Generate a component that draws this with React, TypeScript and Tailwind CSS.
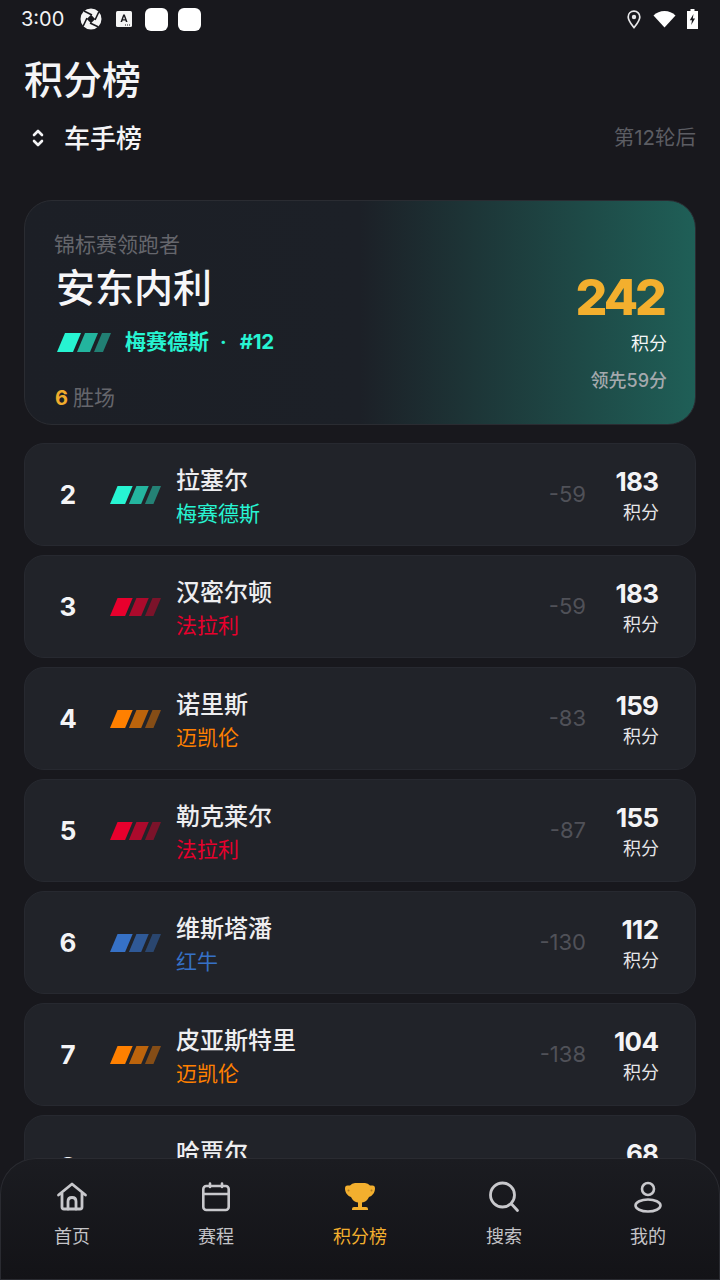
const FONT = "font-['Inter','Noto_Sans_CJK_SC',sans-serif]";

const drivers = [
  { pos: 2, name: "拉塞尔", team: "梅赛德斯", color: "#27f4d2", gap: "-59", pts: 183 },
  { pos: 3, name: "汉密尔顿", team: "法拉利", color: "#e8002d", gap: "-59", pts: 183 },
  { pos: 4, name: "诺里斯", team: "迈凯伦", color: "#ff8000", gap: "-83", pts: 159 },
  { pos: 5, name: "勒克莱尔", team: "法拉利", color: "#e8002d", gap: "-87", pts: 155 },
  { pos: 6, name: "维斯塔潘", team: "红牛", color: "#3671c6", gap: "-130", pts: 112 },
  { pos: 7, name: "皮亚斯特里", team: "迈凯伦", color: "#ff8000", gap: "-138", pts: 104 },
  { pos: 8, name: "哈贾尔", team: "红牛", color: "#3671c6", gap: "-174", pts: 68 },
];

// Three slanted bars that fade out, the team mark
function TeamStripes({ color, width, height }: { color: string; width: number; height: number }) {
  return (
    <svg width={width} height={height} viewBox="0 0 54 19" preserveAspectRatio="none" className="shrink-0">
      <polygon points="0,19 8,0 24,0 16,19" fill={color} />
      <polygon points="20,19 28,0 41,0 33,19" fill={color} fillOpacity="0.7" />
      <polygon points="37,19 45,0 54,0 46,19" fill={color} fillOpacity="0.45" />
    </svg>
  );
}

function StatusBar() {
  return (
    <div className="flex h-[38px] items-center justify-between pl-[21px] pr-[22px]">
      <div className="flex items-center">
        <span className="text-[20px] leading-none text-[#f2f2f4]">3:00</span>
        <svg width="22" height="22" viewBox="0 0 22 22" className="ml-[16px]">
          <circle cx="11" cy="11" r="10.5" fill="#f5f5f5" />
          <path d="M11 6.8 L15.2 11 L11 15.2 L6.8 11 Z" fill="#18181d" />
          <path d="M12 7 L4 3 M15 12 L19 3.5 M10 15 L18.5 19 M7 10 L3 18.5" stroke="#18181d" strokeWidth="1.6" fill="none" />
        </svg>
        <svg width="16" height="16" viewBox="0 0 16 16" className="ml-[14px]">
          <rect width="16" height="16" rx="1.5" fill="#f5f5f5" />
          <path d="M4.5 11 L7.2 3.5 H8.8 L11.5 11 H9.9 L9.4 9.5 H6.6 L6.1 11 Z M7 8.3 H9 L8 5.5 Z" fill="#18181d" />
          <path d="M9 13.5 h1 v1 h-1 Z M11 13.5 h1 v1 h-1 Z M13 13.5 h1 v1 h-1 Z" fill="#18181d" />
        </svg>
        <div className="ml-[13px] h-[23px] w-[23px] rounded-[6px] bg-white" />
        <div className="ml-[10px] h-[23px] w-[23px] rounded-[6px] bg-white" />
      </div>
      <div className="flex items-center">
        <svg width="14" height="19" viewBox="0 0 14 19">
          <path d="M7 1.2 C3.6 1.2 1.2 3.7 1.2 6.9 C1.2 10.6 5 15 7 17.6 C9 15 12.8 10.6 12.8 6.9 C12.8 3.7 10.4 1.2 7 1.2 Z" fill="none" stroke="#e8e8ea" strokeWidth="1.7" />
          <circle cx="7" cy="7" r="2.2" fill="#e8e8ea" />
        </svg>
        <svg width="23" height="18" viewBox="0 0 23 18" className="ml-[12px]">
          <path d="M0.5 5.5 C3.5 2.6 7.2 1 11.5 1 C15.8 1 19.5 2.6 22.5 5.5 L11.5 17.5 Z" fill="#ffffff" />
        </svg>
        <svg width="11" height="20" viewBox="0 0 11 20" className="ml-[11px]">
          <path d="M3.5 0 H7.5 V2 H11 V20 H0 V2 H3.5 Z M6.5 5 L2.8 11.2 H5 L4.2 16 L8 9.6 H5.8 Z" fill="#ffffff" fillRule="evenodd" />
        </svg>
      </div>
    </div>
  );
}

function LeaderCard() {
  return (
    <div className="mx-6 mt-[42px] flex h-[225px] justify-between rounded-[28px] border border-[#2a2c32] bg-[linear-gradient(90deg,#1c1f26_0%,#1c2027_50%,#1f5f57_100%)] pl-[29px] pr-[28px]">
      <div className="flex flex-col">
        <p className="mt-[29px] text-[21px] leading-[30px] text-[#65666c]">锦标赛领跑者</p>
        <p className="ml-[2px] mt-[3px] text-[39px] font-medium leading-[50px] text-[#f6f6f8]">安东内利</p>
        <div className="ml-[3px] mt-[14px] flex h-[30px] items-center">
          <TeamStripes color="#27f4d2" width={54} height={19} />
          <span className="ml-[14px] text-[21px] font-bold text-[#27f4d2]">梅赛德斯</span>
          <span className="ml-[11px] text-[20px] font-bold text-[#27f4d2]">·</span>
          <span className="ml-[13px] text-[20.5px] font-bold tracking-[-0.3px] text-[#27f4d2]">#12</span>
        </div>
        <div className="ml-[1px] mt-[26px] flex h-[30px] items-center">
          <span className="text-[20px] font-bold text-[#f0ac2c]">6</span>
          <span className="ml-[5px] text-[21px] text-[#65666c]">胜场</span>
        </div>
      </div>
      <div className="flex flex-col items-end">
        <p className="mr-[3px] mt-[64px] text-[50px] font-extrabold leading-[64px] tracking-[-3px] text-[#f3af2e]">242</p>
        <p className="mt-[2px] text-[18px] leading-[26px] text-[#f4f6f6]">积分</p>
        <p className="mt-[11px] text-[18px] font-medium leading-[26px] text-[#a4a9ad]">领先59分</p>
      </div>
    </div>
  );
}

function DriverRow({ d }: { d: (typeof drivers)[number] }) {
  return (
    <div className="flex h-[103px] shrink-0 items-center rounded-[20px] border border-[#272930] bg-[#212329] pl-[23px] pr-[36px]">
      <span className="w-10 pb-[1px] text-center text-[26px] font-bold text-[#f4f4f6]">{d.pos}</span>
      <div className="ml-[22px]">
        <TeamStripes color={d.color} width={51} height={18} />
      </div>
      <div className="ml-[15px] flex min-w-0 flex-1 flex-col pt-[3px]">
        <span className="text-[24px] font-medium leading-[35px] text-[#eeeef0]">{d.name}</span>
        <span className="text-[21px] leading-[31px]" style={{ color: d.color }}>{d.team}</span>
      </div>
      <span className="text-[22px] text-[#505158]">{d.gap}</span>
      <div className="flex w-[73px] flex-col items-end pt-[2px]">
        <span className="mr-[0.7px] text-[26px] font-bold leading-[34px] tracking-[-0.7px] text-[#f4f4f6]">{d.pts}</span>
        <span className="text-[18px] leading-[28px] text-[#e6e6e8]">积分</span>
      </div>
    </div>
  );
}

const navStroke = "#c8c8cc";

function HomeIcon() {
  return (
    <svg width="32" height="32" viewBox="0 0 32 32" fill="none" stroke={navStroke} strokeWidth="2.8" strokeLinejoin="round" strokeLinecap="round">
      <path d="M2.5 14 L16 3 L29.5 14 M6 12 V26 Q6 28 8 28 H24 Q26 28 26 26 V12" />
      <path d="M12 28 V20.5 Q12 16.5 16 16.5 Q20 16.5 20 20.5 V28" />
    </svg>
  );
}

function CalendarIcon() {
  return (
    <svg width="32" height="32" viewBox="0 0 32 32" fill="none" stroke={navStroke} strokeWidth="2.6" strokeLinecap="round">
      <rect x="3.3" y="5" width="25.4" height="24" rx="3" />
      <path d="M3.5 13 H28.5 M10 2.5 V6 M22 2.5 V6" />
    </svg>
  );
}

function TrophyIcon() {
  return (
    <svg width="32" height="32" viewBox="0 0 32 32">
      <path
        d="M6 4.5 Q8 2 11 2 H21 Q24 2 26 4.5 H28.5 Q31 4.5 31 7.5 C31 12 28 15 25 16 C23.5 19.5 21 21 18 21.5 V26 H22 Q24 26 24 28 V29 H8 V28 Q8 26 10 26 H14 V21.5 C11 21 8.5 19.5 7 16 C4 15 1 12 1 7.5 Q1 4.5 3.5 4.5 Z"
        fill="#f3af2e"
      />
      <circle cx="4.5" cy="9.5" r="1" fill="#b07c20" />
      <circle cx="27.5" cy="9.5" r="1" fill="#b07c20" />
    </svg>
  );
}

function SearchIcon() {
  return (
    <svg width="32" height="32" viewBox="0 0 32 32" fill="none" stroke={navStroke} strokeWidth="2.8" strokeLinecap="round">
      <circle cx="14.5" cy="14" r="12" />
      <path d="M23.5 23 L29.5 29.5" />
    </svg>
  );
}

function UserIcon() {
  return (
    <svg width="32" height="32" viewBox="0 0 32 32" fill="none" stroke={navStroke} strokeWidth="2.6">
      <circle cx="16" cy="8" r="6" />
      <ellipse cx="16" cy="24.5" rx="12.5" ry="6" />
    </svg>
  );
}

const tabs = [
  { label: "首页", icon: <HomeIcon /> },
  { label: "赛程", icon: <CalendarIcon /> },
  { label: "积分榜", icon: <TrophyIcon />, active: true },
  { label: "搜索", icon: <SearchIcon /> },
  { label: "我的", icon: <UserIcon /> },
];

function BottomNav() {
  return (
    <nav className="absolute inset-x-0 bottom-0 grid h-[122px] grid-cols-5 rounded-t-[36px] bg-[linear-gradient(180deg,#1b1c21_0%,#131317_100%)] shadow-[inset_0_0_0_1px_#2a2b31]">
      {tabs.map((t) => (
        <div key={t.label} className="flex flex-col items-center pt-[23px]">
          {t.icon}
          <span className={`mt-[11px] text-[18px] leading-[26px] ${t.active ? "text-[#f3af2e]" : "text-[#c4c4c8]"}`}>
            {t.label}
          </span>
        </div>
      ))}
    </nav>
  );
}

export default function App() {
  return (
    <div className={`relative h-[1280px] w-[720px] overflow-hidden bg-[#18181d] ${FONT}`}>
      <StatusBar />
      <header className="pl-6 pr-6">
        <h1 className="mt-[17px] text-[39px] font-medium leading-[50px] text-[#f4f4f6]">积分榜</h1>
        <div className="mt-[13px] flex h-[40px] items-center justify-between">
          <div className="flex items-center">
            <svg width="12" height="20" viewBox="0 0 12 20" fill="none" stroke="#f4f4f6" strokeWidth="2.6" strokeLinecap="round" strokeLinejoin="round" className="ml-[8px]">
              <path d="M2 7 L6 3 L10 7 M2 13 L6 17 L10 13" />
            </svg>
            <span className="ml-[20px] text-[26px] font-medium text-[#f4f4f6]">车手榜</span>
          </div>
          <span className="text-[20.5px] text-[#5c5d63]">第12轮后</span>
        </div>
      </header>
      <LeaderCard />
      <div className="mx-6 mt-[18px] flex flex-col gap-[9px]">
        {drivers.map((d) => (
          <DriverRow key={d.pos} d={d} />
        ))}
      </div>
      <BottomNav />
    </div>
  );
}
